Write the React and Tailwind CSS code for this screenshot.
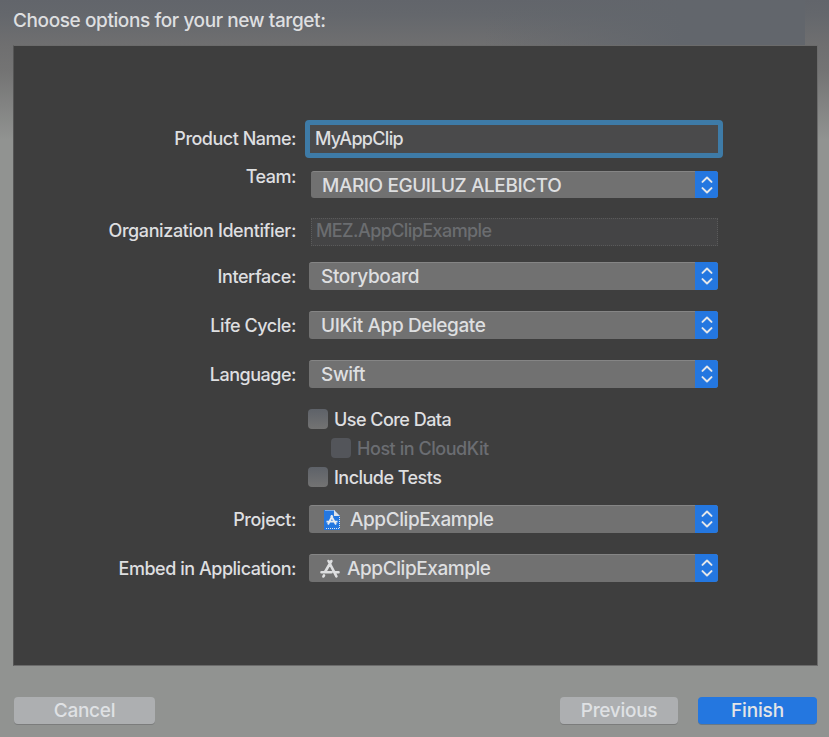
import React from "react";

function Chevrons() {
  return (
    <span className="-mt-px flex h-[calc(100%+1px)] w-[23px] shrink-0 items-center justify-center rounded-r-[3px] bg-[#2477e0]">
      <svg className="ml-px" width="12" height="18" viewBox="0 0 12 18" fill="none" stroke="#e4e7ea" strokeWidth="2" strokeLinecap="round" strokeLinejoin="round">
        <path d="M1.500 5.900 6 1.500l4.500 4.400M1.500 12.100 6 16.500l4.500-4.400" />
      </svg>
    </span>
  );
}

function DocIcon() {
  return (
    <svg className="ml-[14px] mr-[9px] shrink-0" width="18" height="22" viewBox="0 0 18 22">
      <path d="M1 1h10l6 6v14H1z" fill="#2477e0" />
      <path d="M2.500 1.500h9M3 19.500h13" stroke="#dfe5ec" strokeWidth="1" strokeDasharray="1 1" fill="none" />
      <path d="M16.500 8v12" stroke="#dfe5ec" strokeWidth="1" strokeDasharray="1 1" />
      <path d="M11 1v6h6z" fill="#dfe3e8" />
      <path d="M9.500 6.500 5 15.500M8 6.500l5 9M3.500 12.600h11" stroke="#e8ecf0" strokeWidth="1.900" fill="none" />
    </svg>
  );
}

function AppIcon() {
  return (
    <svg className="ml-[11px] mr-[7px] shrink-0" width="20" height="20" viewBox="0 0 20 20" fill="none" stroke="#dedfe0" strokeWidth="2.600" strokeLinecap="round">
      <path d="M11.400 2 5 13M8.500 2l7.900 15.300M1.500 13.300h10M15 13.300h3.500M4 16.300l-.6 1.200" />
    </svg>
  );
}

function Row({ label, spacing, row, labelClass = "", children }) {
  return (
    <div className={`flex shrink-0 items-center ${row}`}>
      <div className={`mr-[13px] w-[282px] shrink-0 whitespace-nowrap text-right ${spacing} ${labelClass}`}>{label}</div>
      {children}
    </div>
  );
}

function Select({ children, icon, className = "w-[409px]", text }) {
  return (
    <div className={`flex h-full items-center rounded-[3px] border-t border-[#858585] bg-[#717171] ${className}`}>
      {icon}
      <span className={`flex-1 whitespace-nowrap text-[19px] ${text}`}>{children}</span>
      <Chevrons />
    </div>
  );
}

function Check({ children, className, box = "bg-linear-to-b from-[#5e6269] to-[#737373]", text }) {
  return (
    <div className={`flex h-[21px] shrink-0 items-center ${className}`}>
      <span className={`mr-[6px] size-[20px] rounded-[4px] ${box}`} />
      <span className={`whitespace-nowrap pt-[2px] ${text}`}>{children}</span>
    </div>
  );
}

export default function App() {
  return (
    <main className="flex h-[737px] w-[829px] flex-col overflow-hidden bg-[linear-gradient(180deg,#62656b_0px,#64676c_14px,#6f6f70_45px,#747474_72px,#919391_140px,#919391_100%)] font-['Inter','Liberation_Sans',sans-serif] text-[18px] font-medium leading-[24px] text-[#dedfe0]">
      <h1 className="h-[45px] w-[805px] shrink-0 whitespace-nowrap bg-linear-to-r from-transparent from-60% to-[#62666c] to-85% pl-[13px] pt-[9px] text-[19px] font-medium tracking-[-0.4px]">
        Choose options for your new target:
      </h1>
      <section className="ml-[13px] flex h-[621px] w-[805px] shrink-0 flex-col border border-[#6b6b6b] border-l-[#555] bg-[#3e3e3e]">
        <Row label="Product Name:" row="mt-[74px] h-[37px]" spacing="tracking-[-0.5px]">
          <div className="-ml-[4px] flex h-[38px] w-[418px] items-center rounded-[4px] border-[5px] border-[#3e7ba7] bg-[#4a4a4b] pl-[5px] tracking-[-0.68px]">
            MyAppClip
          </div>
        </Row>
        <Row label="Team:" row="mt-[14px] h-[27px]" spacing="tracking-[-0.5px]" labelClass="pb-[15px]">
          <Select className="ml-[2px] w-[407px]" text="pl-[11px] pt-px tracking-[-0.42px]">MARIO EGUILUZ ALEBICTO</Select>
        </Row>
        <Row label="Organization Identifier:" row="mt-[20px] h-[28px]" spacing="tracking-[-0.4px]" labelClass="pb-[2px]">
          <div className="ml-[2px] flex h-full w-[407px] items-center border border-dotted border-[#5a5a5a] bg-[#444445] pb-[2px] pl-[4px] tracking-[-0.58px] text-[#6b6d70]">
            MEZ.AppClipExample
          </div>
        </Row>
        <Row label="Interface:" row="mt-[16px] h-[28px]" spacing="tracking-[-0.42px]" labelClass="pt-[2px]">
          <Select text="pl-[12px] tracking-[-0.35px]">Storyboard</Select>
        </Row>
        <Row label="Life Cycle:" row="mt-[21px] h-[28px]" spacing="tracking-[-0.45px]" labelClass="pt-[2px]">
          <Select text="pl-[12px] tracking-[-0.4px]">UIKit App Delegate</Select>
        </Row>
        <Row label="Language:" row="mt-[21px] h-[28px]" spacing="tracking-[-0.48px]" labelClass="pt-[2px]">
          <Select text="pl-[12px] tracking-[-0.35px]">Swift</Select>
        </Row>
        <Check className="ml-[294px] mt-[20px]" text="tracking-[-0.53px]">Use Core Data</Check>
        <Check className="ml-[317px] mt-[8px]" box="bg-[#53555a]" text="tracking-[-0.45px] text-[#6b6d72]">Host in CloudKit</Check>
        <Check className="ml-[294px] mt-[8px]" text="tracking-[-0.53px]">Include Tests</Check>
        <Row label="Project:" row="mt-[18px] h-[28px]" spacing="tracking-[-0.42px]" labelClass="pt-[2px]">
          <Select icon={<DocIcon />} text="tracking-[-0.43px]">AppClipExample</Select>
        </Row>
        <Row label="Embed in Application:" row="mt-[21px] h-[28px]" spacing="tracking-[-0.47px]" labelClass="pt-[2px]">
          <Select icon={<AppIcon />} text="tracking-[-0.43px]">AppClipExample</Select>
        </Row>
      </section>
      <footer className="mt-[31px] flex h-[27px] shrink-0 pl-[14px] text-[19px] tracking-[-0.3px]">
        <button className="w-[141px] rounded-[4px] bg-[#adafb1] text-[#dfe1e4] shadow-[0_1px_0_#7b7c7c]">Cancel</button>
        <button className="ml-[405px] w-[118px] rounded-[4px] bg-[#adafb1] text-[#dfe1e4] shadow-[0_1px_0_#7b7c7c]">Previous</button>
        <button className="ml-[20px] w-[119px] rounded-[4px] bg-[#2477e0] tracking-[-0.15px] text-[#e4e5e6] shadow-[0_1px_0_#687886]">Finish</button>
      </footer>
    </main>
  );
}
